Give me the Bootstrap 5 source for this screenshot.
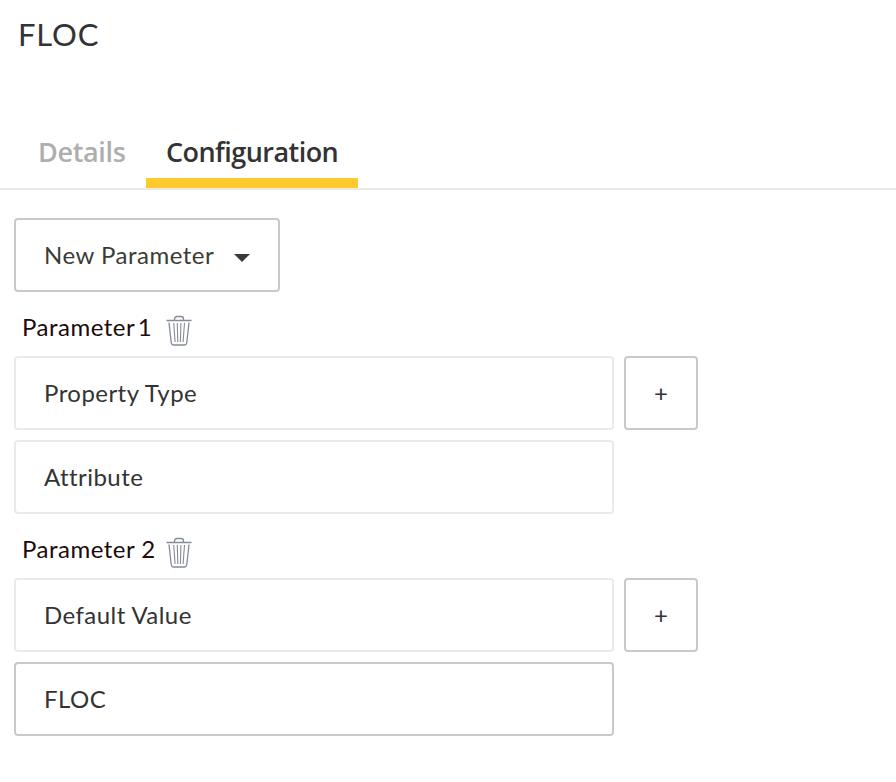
<!DOCTYPE html>
<html lang="en">
<head>
<meta charset="utf-8">
<meta name="viewport" content="width=device-width, initial-scale=1">
<title>FLOC</title>
<link href="https://cdn.jsdelivr.net/npm/bootstrap@5.3.0/dist/css/bootstrap.min.css" rel="stylesheet">
<style>
body{font-family:Lato,"Open Sans",sans-serif;font-size:24px;line-height:32px;color:#333;background:#fff}
.page-title{font-size:31px;line-height:40px;font-weight:400;padding:14px 0 0 18px;height:128px;letter-spacing:.8px}
.tabs{height:62px;border-bottom:2px solid #ebebe6;padding-left:18px}
.tabs .nav-link{height:60px;padding:8px 20px 0;font-family:"Open Sans",sans-serif;font-size:27px;line-height:32px;font-weight:600;letter-spacing:-.55px;color:#aeaeae;border-radius:0;white-space:nowrap}
.tabs .tab-details{width:128px;letter-spacing:-.35px}
.tabs .tab-config{width:212px;color:#333;border-bottom:10px solid #ffca2d}
.editor{padding:28px 0 0 14px}
.box{height:74px;border:2px solid #ebebe6;border-radius:4px;padding:0 28px;color:#333;font-size:24px;line-height:32px;background:#fff}
.box-strong{border-color:#c9c9c9}
.new-btn{width:266px;color:#3b3b35}
.new-btn::after{margin:5px 0 0;border-top:8px solid;border-left:8px solid transparent;border-right:8px solid transparent}
.rows{gap:10px}
.field{width:600px;letter-spacing:.45px}
.add-btn{width:74px;padding:0}
.param-head{height:64px;padding-left:8px;color:#200a0a}
.param-name{width:143px;padding-top:19px;letter-spacing:.5px}
.param-first{word-spacing:-3.5px}
.trash{margin-top:23px}
.new-label{width:190px;letter-spacing:.5px;text-align:left}
</style>
<script src="https://cdn.jsdelivr.net/npm/bootstrap@5.3.0/dist/js/bootstrap.bundle.min.js"></script>
</head>
<body>
<h1 class="page-title mb-0">FLOC</h1>
<nav class="nav tabs flex-nowrap">
  <a class="nav-link tab-details" href="#">Details</a>
  <a class="nav-link tab-config active" href="#">Configuration</a>
</nav>
<svg class="d-none">
  <symbol id="trash" viewBox="0 0 28 32"><g fill="none" stroke="#858b98"><path stroke-width="1.3" d="M1.500 5.500h25M9.500 5V4q0-2.500 2.500-2.500h4q2.500 0 2.500 2.500v1M4 7.500l2.200 20q.3 2.500 2.500 2.500h10.600q2.200 0 2.500-2.500L24 7.500"/><path stroke-width="1.100" d="M8.700 8l1.400 19M12.300 8l.5 19M15.900 8l-.5 19M19.500 8L18.100 27"/></g></symbol>
</svg>
<main class="editor">
  <button class="btn box box-strong new-btn dropdown-toggle d-flex align-items-center" type="button"><span class="new-label">New Parameter</span></button>
  <section>
    <div class="param-head d-flex align-items-start">
      <span class="param-name param-first">Parameter 1</span>
      <svg class="trash" width="28" height="32"><use href="#trash"/></svg>
    </div>
    <div class="rows d-flex flex-column">
      <div class="rows d-flex">
        <div class="box field d-flex align-items-center">Property Type</div>
        <button class="btn box box-strong add-btn" type="button">+</button>
      </div>
      <div class="box field d-flex align-items-center">Attribute</div>
    </div>
  </section>
  <section>
    <div class="param-head d-flex align-items-start">
      <span class="param-name">Parameter 2</span>
      <svg class="trash" width="28" height="32"><use href="#trash"/></svg>
    </div>
    <div class="rows d-flex flex-column">
      <div class="rows d-flex">
        <div class="box field d-flex align-items-center">Default Value</div>
        <button class="btn box box-strong add-btn" type="button">+</button>
      </div>
      <div class="box box-strong field d-flex align-items-center">FLOC</div>
    </div>
  </section>
</main>
</body>
</html>
